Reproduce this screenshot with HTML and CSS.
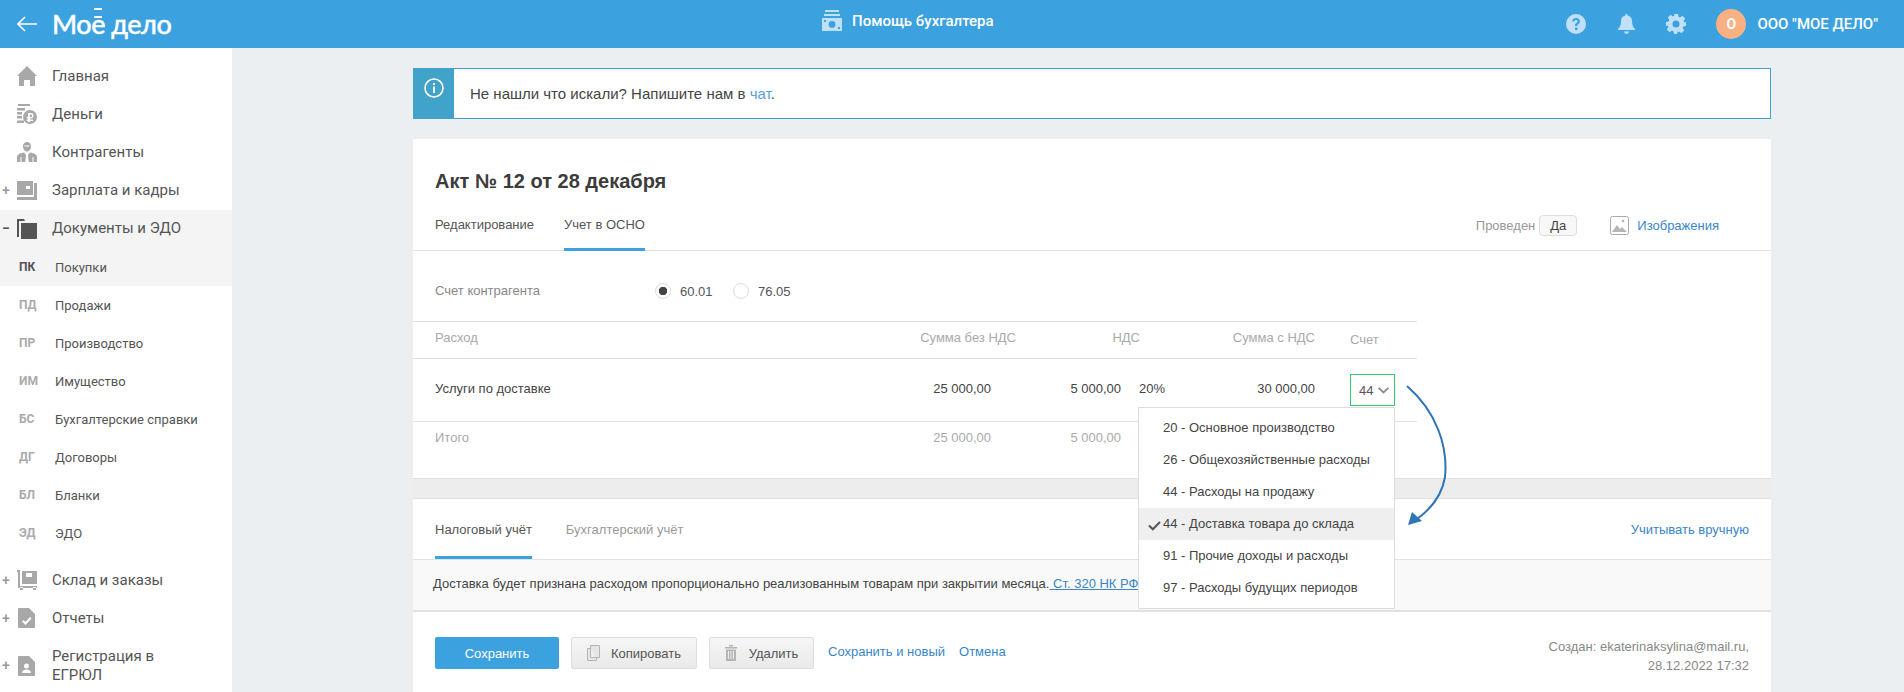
FILE: index.html
```html
<!DOCTYPE html>
<html lang="ru">
<head>
<meta charset="utf-8">
<title>Моё дело</title>
<link rel="stylesheet" href="styles.css">
</head>
<body>
<header class="topbar">
  <div class="brand">
    <svg class="back" width="20" height="16" viewBox="0 0 20 16"><path d="M8 1 1 8l7 7M1 8h19" fill="none" stroke="#fff" stroke-width="1.6"/></svg>
    <span class="logo">Мо<span class="logo-e">е</span> дело</span>
  </div>
  <div class="help-center">
    <svg width="20" height="21" viewBox="0 0 20 21"><path d="M3 0h14v2H3zM2 4h16v2H2z" fill="#bfe0f7"/><path fill="#bfe0f7" fill-rule="evenodd" d="M0 8h20v13H0zM10 11a3.4 3.4 0 1 0 0 6.800A3.400 3.400 0 0 0 10 11zM2 10v2h2v-2zM16 17v2h2v-2z"/></svg>
    <span>Помощь бухгалтера</span>
  </div>
  <div class="top-actions">
    <svg class="act-help" width="20" height="20" viewBox="0 0 20 20"><path fill="#bfe0f7" fill-rule="evenodd" d="M10 0a10 10 0 1 1 0 20A10 10 0 0 1 10 0zM9 13.500v2.500h2.500v-2.500zM10 4C7.700 4 6.300 5.300 6.100 7.300l2.200.3C8.500 6.600 9 6 10 6c.9 0 1.500.5 1.500 1.300 0 .7-.4 1.100-1.100 1.600C9.300 9.700 9 10.400 9 12h2.400c0-1 .2-1.400 1.100-2 1-.8 1.500-1.600 1.500-2.800C14 5.300 12.400 4 10 4z"/></svg>
    <svg class="act-bell" width="17" height="20" viewBox="0 0 17 20"><path fill="#bfe0f7" d="M8.500 0C9.300 0 9.700.5 9.700 1.400 12.500 2 14 4 14 7c0 4 1 6 3 8v1H0v-1c2-2 3-4 3-8 0-3 1.500-5 4.300-5.600C7.300.5 7.700 0 8.500 0zM6 17.500h5C10.800 19 9.800 20 8.500 20S6.200 19 6 17.500z"/></svg>
    <svg class="act-gear" width="20" height="20" viewBox="0 0 20 20"><path fill="#bfe0f7" fill-rule="evenodd" d="M8 0h4l.5 2.700 1.600.7 2.300-1.600 2.800 2.800-1.600 2.300.7 1.600L20 8v4l-2.700.5-.7 1.600 1.600 2.300-2.800 2.800-2.300-1.600-1.600.7L11 20H8l-.5-2.700-1.600-.7-2.300 1.600-2.800-2.800 1.600-2.300-.7-1.600L0 12V8l2.700-.5.7-1.600-1.600-2.300 2.800-2.800 2.300 1.600 1.600-.7zM10 6.500a3.500 3.500 0 1 0 0 7 3.500 3.500 0 0 0 0-7z"/></svg>
    <span class="avatar">О</span>
    <span class="org">ООО "МОЕ ДЕЛО"</span>
  </div>
</header>

<div class="layout">
  <nav class="sidebar">
    <div class="nav-item"><span class="toggle"></span>
      <svg class="nav-ico" viewBox="0 0 20 20"><path d="M10 0 20 10h-2v10h-5v-6H7v6H2V10H0z"/></svg>
      <span>Главная</span></div>
    <div class="nav-item"><span class="toggle"></span>
      <svg class="nav-ico" viewBox="0 0 20 20"><path d="M1 0h12v2H1zM0 4h8v2.500H0zM0 8h5v2.500H0zM0 12h5v2.500H0zM0 16.500h7V19H0z"/><path fill-rule="evenodd" d="M13 6a7 7 0 1 1 0 14 7 7 0 0 1 0-14zM11 9v4H9.800v1.500H11v1H9.800V17H11v1h1.800v-1H16v-1.500h-3.200v-1h1.400c1.500 0 2.300-1.200 2.300-2.700S15.700 9 14.200 9zM12.800 10.500h1.200c.6 0 1 .5 1 1.300s-.4 1.200-1 1.200h-1.200z"/></svg>
      <span>Деньги</span></div>
    <div class="nav-item"><span class="toggle"></span>
      <svg class="nav-ico" viewBox="0 0 20 20"><path fill-rule="evenodd" d="M10 0c2.500 0 4 1.700 4 4.200S12.500 9.500 10 9.500 6 6.700 6 4.200 7.500 0 10 0zM7.500 3.500v1h5v-1zM0 20v-5c0-2.500 3-3.800 7-4.500l2 2.500-.8 7zM20 20v-5c0-2.500-3-3.800-7-4.500L11 13l.8 7zM3.500 15v5h1v-5zM15.500 15v5h1v-5z"/></svg>
      <span>Контрагенты</span></div>
    <div class="nav-item"><span class="toggle">+</span>
      <svg class="nav-ico" viewBox="0 0 20 20"><path fill-rule="evenodd" d="M0 1h16v14H0zM9 6v3h4V6zM17 3h3v17H0v-3h17z"/></svg>
      <span>Зарплата и кадры</span></div>
    <div class="nav-group">
      <div class="nav-item nav-open"><span class="toggle toggle-open">−</span>
        <svg class="nav-ico nav-ico-dark" viewBox="0 0 20 20"><path d="M0 0h7l1 2h-6v16H0zM4 4h16v15a1 1 0 0 1-1 1H4z"/></svg>
        <span>Документы и ЭДО</span></div>
      <div class="sub-item sub-active"><span class="abbr">ПК</span><span>Покупки</span></div>
    </div>
    <div class="sub-list">
      <div class="sub-item"><span class="abbr">ПД</span><span>Продажи</span></div>
      <div class="sub-item"><span class="abbr">ПР</span><span>Производство</span></div>
      <div class="sub-item"><span class="abbr">ИМ</span><span>Имущество</span></div>
      <div class="sub-item"><span class="abbr">БС</span><span>Бухгалтерские справки</span></div>
      <div class="sub-item"><span class="abbr">ДГ</span><span>Договоры</span></div>
      <div class="sub-item"><span class="abbr">БЛ</span><span>Бланки</span></div>
      <div class="sub-item"><span class="abbr">ЭД</span><span>ЭДО</span></div>
    </div>
    <div class="nav-item"><span class="toggle">+</span>
      <svg class="nav-ico" viewBox="0 0 20 20"><path fill-rule="evenodd" d="M0 0h3v16h17v2H1V2H0zM5 1h15v13H5zM9 3v4h6V3zM3 17h3v3H3zM16 17h3v3h-3z"/></svg>
      <span>Склад и заказы</span></div>
    <div class="nav-item"><span class="toggle">+</span>
      <svg class="nav-ico" viewBox="0 0 20 20"><path fill-rule="evenodd" d="M2 0h10l6 6v13a1 1 0 0 1-1 1H2a1 1 0 0 1-1-1V1a1 1 0 0 1 1-1zM13 9l-4.500 5-2-2L5 13.500l3.500 3.500 6-6.500z"/></svg>
      <span>Отчеты</span></div>
    <div class="nav-item nav-tall"><span class="toggle">+</span>
      <svg class="nav-ico" viewBox="0 0 20 20"><path fill-rule="evenodd" d="M2 0h10l6 6v13a1 1 0 0 1-1 1H2a1 1 0 0 1-1-1V1a1 1 0 0 1 1-1zM9.500 7.500a2.500 2.500 0 1 0 0 5 2.500 2.500 0 0 0 0-5zM5 17h9c0-2.300-2-3.500-4.500-3.500S5 14.700 5 17z"/></svg>
      <span>Регистрация в<br>ЕГРЮЛ</span></div>
  </nav>

  <main class="content">
    <div class="alert">
      <div class="alert-ico"><svg width="20" height="20" viewBox="0 0 20 20"><circle cx="10" cy="10" r="9" fill="none" stroke="#fff" stroke-width="1.600"/><path d="M9 8.500h2V15H9zM9 5h2v2H9z" fill="#fff"/></svg></div>
      <p class="alert-text">Не нашли что искали? Напишите нам в <a class="alert-link">чат</a>.</p>
    </div>

    <section class="card">
      <h1 class="doc-title">Акт № 12 от 28 декабря</h1>
      <div class="tabs">
        <span class="tab">Редактирование</span>
        <span class="tab tab-active">Учет в ОСНО</span>
        <div class="tabs-right">
          <span class="status-label">Проведен</span>
          <span class="status-badge">Да</span>
          <svg class="img-ico" width="19" height="19" viewBox="0 0 19 19"><rect x=".5" y=".5" width="18" height="18" rx="2" fill="#fff" stroke="#aaa"/><path d="M2 16l5-7 3 4 2-2 5 5z" fill="#b5b5b5"/><circle cx="13" cy="5" r="1.300" fill="#b5b5b5"/></svg>
          <a class="link">Изображения</a>
        </div>
      </div>

      <div class="accounting">
        <div class="contractor">
          <span class="contractor-label">Счет контрагента</span>
          <span class="radio radio-on"></span><span class="radio-text">60.01</span>
          <span class="radio"></span><span class="radio-text">76.05</span>
        </div>
        <div class="thead">
          <span>Расход</span>
          <span class="num">Сумма без НДС</span>
          <span class="num">НДС</span>
          <span class="num">Сумма с НДС</span>
          <span class="th-acc">Счет</span>
        </div>
        <div class="trow">
          <span>Услуги по доставке</span>
          <span class="num">25 000,00</span>
          <span class="num">5 000,00</span>
          <span class="rate">20%</span>
          <span class="num">30 000,00</span>
          <span class="select">44<svg width="11" height="7" viewBox="0 0 11 7"><path d="M.7.8 5.500 5.500 10.300.8" fill="none" stroke="#8c8c8c" stroke-width="1.800"/></svg></span>
        </div>
        <div class="ttotal">
          <span>Итого</span>
          <span class="num">25 000,00</span>
          <span class="num">5 000,00</span>
        </div>
      </div>

      <div class="band"></div>

      <div class="tabs tabs-tax">
        <span class="tab">Налоговый учёт</span>
        <span class="tab tab-muted">Бухгалтерский учёт</span>
        <a class="link link-right">Учитывать вручную</a>
      </div>
      <div class="notice">Доставка будет признана расходом пропорционально реализованным товарам при закрытии месяца.<a class="notice-link"> Ст. 320 НК РФ</a></div>

      <div class="actions">
        <button class="btn btn-primary">Сохранить</button>
        <button class="btn btn-copy"><svg width="13" height="16" viewBox="0 0 13 16"><path d="M3.500.5h9v12h-9zM3.500 3.500H.5v12h9v-3" fill="#e6e6e6" stroke="#b5b5b5"/></svg>Копировать</button>
        <button class="btn btn-del"><svg width="12" height="16" viewBox="0 0 12 16"><path d="M0 2h12v1.500H0zM4 0h4v1.500H4zM1 4.500h10V16H1zM3 6v8h1V6zM5.500 6v8h1V6zM8 6v8h1V6z" fill="#b5b5b5" fill-rule="evenodd"/></svg>Удалить</button>
        <a class="link link-save">Сохранить и новый</a>
        <a class="link link-cancel">Отмена</a>
        <div class="created">Создан: ekaterinaksylina@mail.ru,<br>28.12.2022 17:32</div>
      </div>

      <ul class="dropdown">
        <li>20 - Основное производство</li>
        <li>26 - Общехозяйственные расходы</li>
        <li>44 - Расходы на продажу</li>
        <li class="dd-active"><svg class="dd-check" width="13" height="10" viewBox="0 0 13 10"><path d="M1 4.500 4.800 8.300 12 1" fill="none" stroke="#555" stroke-width="2"/></svg>44 - Доставка товара до склада</li>
        <li>91 - Прочие доходы и расходы</li>
        <li>97 - Расходы будущих периодов</li>
      </ul>
      <svg class="arrow" width="56" height="150" viewBox="0 0 56 150"><path d="M2 1C32 27 43 62 40 92 37 110 26 124 12 134" fill="none" stroke="#2f75b5" stroke-width="2"/><path d="M3 140 7 127 17 136z" fill="#2f75b5"/></svg>
    </section>
  </main>
</div>
</body>
</html>
```

FILE: styles.css
```css
* { box-sizing: border-box; }
html, body { margin: 0; height: 692px; overflow: hidden; }
body { background: #ebeff2; font-family: "Liberation Sans", Arial, sans-serif; font-size: 13px; color: #444; display: flex; flex-direction: column; }
a { text-decoration: none; }
p, h1, ul { margin: 0; padding: 0; }

.topbar { height: 48px; flex: none; background: #3ca2df; display: flex; align-items: center; color: #fff; font-family: Roboto, sans-serif; position: relative; }
.brand { width: 232px; display: flex; align-items: center; padding-left: 17px; }
.back { flex: none; margin-right: 15px; }
.logo { font-family: Lato, sans-serif; font-size: 27px; line-height: 34px; font-weight: 500; letter-spacing: -.5px; white-space: nowrap; -webkit-text-stroke: .4px #fff; }
.logo-e { position: relative; }
.logo-e::before { content: ""; position: absolute; left: 3px; right: 3px; top: 1px; height: 6px; border-top: 2px solid #fff; border-bottom: 2px solid #fff; }
.help-center { position: absolute; left: 822px; top: 10px; display: flex; align-items: center; gap: 10px; font-size: 15px; font-weight: 500; height: 21px; }
.top-actions { margin-left: auto; display: flex; align-items: center; padding-right: 26px; }
.act-help { margin-right: 32px; }
.act-bell { margin-right: 31px; }
.act-gear { margin-right: 30px; }
.avatar { width: 30px; height: 30px; border-radius: 50%; background: #f9b184; font-weight: 700; font-size: 14px; display: flex; align-items: center; justify-content: center; margin-right: 11px; }
.org { font-size: 15px; font-weight: 500; }

.layout { flex: 1; display: flex; min-height: 0; }
.sidebar { width: 232px; flex: none; background: #fff; padding-top: 9px; font-family: Roboto, sans-serif; color: #555; }
.nav-item { height: 38px; display: flex; align-items: center; font-size: 15px; line-height: 19px; }
.nav-tall { height: 57px; }
.nav-open { height: 37px; }
.toggle { width: 17px; flex: none; padding-left: 2px; font-size: 14px; color: #999; font-weight: 500; }
.toggle-open { color: #555; font-weight: 700; }
.nav-ico { width: 20px; height: 20px; flex: none; margin-right: 15px; fill: #a8a8a8; }
.nav-ico-dark { fill: #555; }
.nav-group { background: #f4f4f4; margin-top: 1px; }
.sub-list { margin-bottom: 9px; }
.sub-item { height: 38px; padding: 0 0 0 19px; display: flex; align-items: center; font-size: 13px; }
.sub-active { height: 39px; padding-top: 1px; }
.abbr { width: 36px; flex: none; font-weight: 700; font-size: 12px; color: #aaa; }
.sub-active .abbr { color: #555; }

.content { flex: 1; padding: 20px 133px 0 181px; min-width: 0; }
.alert { height: 51px; display: flex; background: #fff; border: 1px solid #3ca2d6; border-left: 0; }
.alert-ico { width: 41px; flex: none; background: #42a3ca; display: flex; justify-content: center; padding-top: 10px; margin-top: -1px; margin-bottom: -1px; }
.alert-text { padding: 15px 0 0 16px; font-size: 15px; line-height: 20px; color: #444; }
.alert-link { color: #5a9fd8; }

.card { background: #fff; margin-top: 20px; position: relative; height: 560px; }
.doc-title { font-size: 20px; line-height: 24px; font-weight: 700; color: #3c3c3c; padding: 30px 0 12px 22px; }
.tabs { height: 46px; display: flex; padding-left: 22px; border-bottom: 1px solid #e1e1e1; align-items: stretch; gap: 30px; }
.tab { display: flex; align-items: center; height: 46px; padding-bottom: 8px; color: #555; font-size: 13px; }
.tab-active { border-bottom: 3px solid #3ca2df; padding-bottom: 5px; }
.tabs-right { margin-left: auto; display: flex; align-items: center; padding: 0 52px 0 0; height: 40px; }
.status-label { color: #999; margin-right: 4px; }
.status-badge { width: 38px; height: 21px; border: 1px solid #ddd; border-radius: 4px; background: #f8f8f8; display: flex; align-items: center; justify-content: center; color: #444; margin-right: 33px; }
.img-ico { margin-right: 8px; }
.link { color: #3a86c8; font-size: 13px; }

.accounting { width: 1004px; }
.contractor { height: 70px; display: flex; align-items: center; padding: 10px 0 0 22px; }
.contractor-label { width: 220px; color: #888; margin-top: -2px; }
.radio { width: 16px; height: 16px; border: 1px solid #ddd; border-radius: 50%; flex: none; margin-right: 9px; background: #fff; }
.radio-on { background: radial-gradient(circle, #444 0 4px, #fff 4.500px); }
.radio-text { width: 53px; color: #555; }
.radio-text:last-child { width: auto; }
.num { text-align: right; white-space: nowrap; }
.thead { height: 38px; padding: 0 0 5px 22px; display: grid; grid-template-columns: 100px 481px 124px 175px 1fr; border-top: 1px solid #e1e1e1; border-bottom: 1px solid #e1e1e1; align-items: center; color: #aaa; }
.th-acc { padding: 3px 0 0 35px; }
.trow { height: 63px; padding: 0 0 4px 22px; display: grid; grid-template-columns: 280px 276px 130px 43px 151px 80px; border-bottom: 1px solid #e1e1e1; align-items: center; color: #444; }
.rate { padding-left: 18px; }
.select { width: 45px; margin-left: 35px; height: 32px; border: 1px solid #2ecc71; display: flex; align-items: center; gap: 5px; padding-left: 8px; color: #555; margin-top: 4px; }
.ttotal { height: 56px; padding: 0 0 26px 22px; display: grid; grid-template-columns: 280px 276px 130px; align-items: center; color: #aaa; }

.band { height: 21px; background: #ededed; border-top: 1px solid #e1e1e1; border-bottom: 1px solid #e1e1e1; }
.tabs-tax { height: 61px; gap: 34px; border-bottom: 1px solid #e1e1e1; }
.tabs-tax .tab { height: 60px; padding-bottom: 0; }
.tabs-tax .tab:first-child { border-bottom: 3px solid #3ca2df; padding-top: 3px; }
.tab-muted { color: #999; }
.link-right { margin: 0 22px 0 auto; align-self: center; }
.notice { height: 52px; background: #f9f9f9; border-bottom: 2px solid #e1e1e1; padding: 16px 0 0 20px; line-height: 16px; color: #444; white-space: nowrap; }
.notice-link { color: #3a86c8; text-decoration: underline; }

.actions { display: flex; align-items: flex-start; padding: 25px 22px 0 22px; }
.btn { height: 32px; border-radius: 2px; font: 13px "Liberation Sans", Arial, sans-serif; display: flex; align-items: center; justify-content: center; cursor: pointer; }
.btn-primary { width: 124px; background: #3ca2df; border: 0; color: #fff; margin-right: 12px; }
.btn-copy, .btn-del { background: linear-gradient(#f6f6f6, #e9e9e9); border: 1px solid #ddd; color: #555; gap: 11px; }
.btn-copy { width: 126px; margin-right: 12px; }
.btn-del { width: 105px; margin-right: 14px; gap: 12px; }
.link-save { line-height: 30px; margin-right: 14px; }
.link-cancel { line-height: 30px; }
.created { margin-left: auto; text-align: right; color: #888; font-size: 13px; line-height: 19px; }

.dropdown { position: absolute; left: 725px; top: 268px; width: 257px; height: 202px; list-style: none; background: #fff; border: 1px solid #ddd; padding-top: 4px; }
.dropdown li { height: 32px; line-height: 32px; padding-left: 24px; color: #444; position: relative; }
.dd-active { background: #efefef; }
.dd-check { position: absolute; left: 9px; top: 13px; }
.arrow { position: absolute; left: 992px; top: 246px; }
```
